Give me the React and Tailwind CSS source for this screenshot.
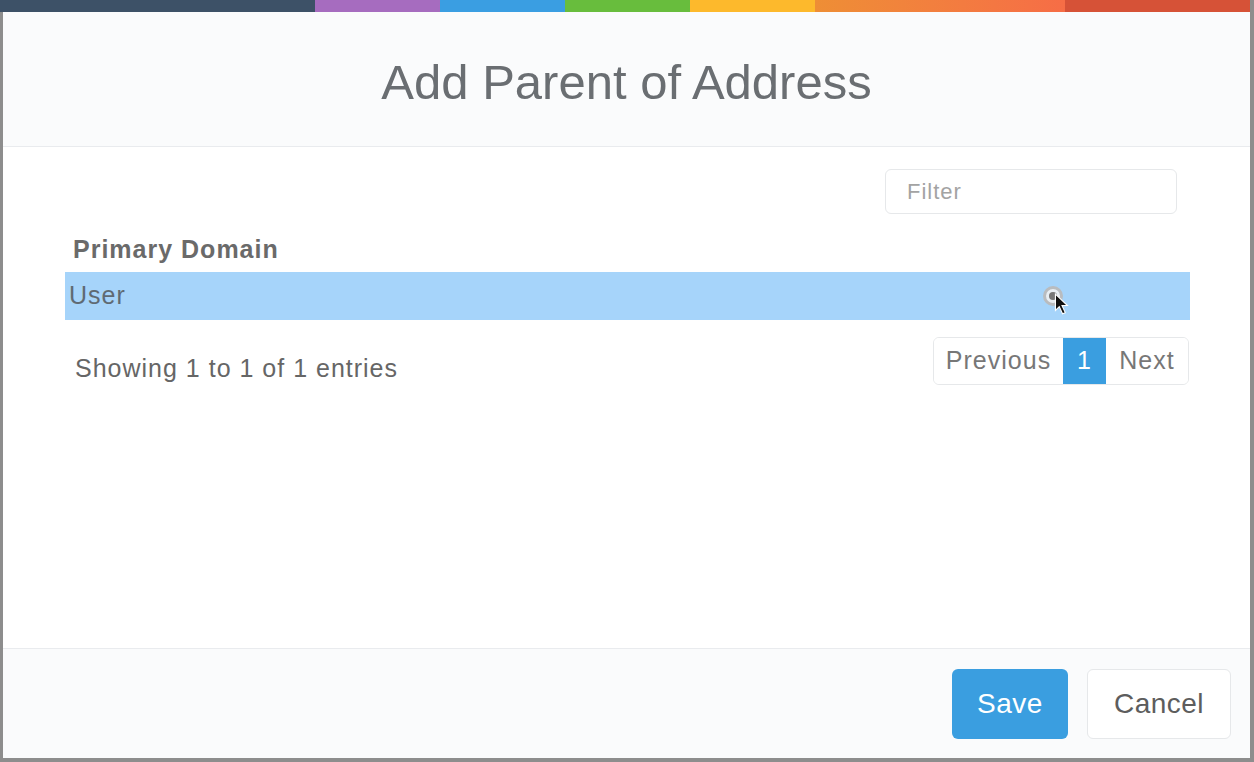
import React from "react";

const stripes = [
  { w: "w-[315px]", c: "bg-[#3d5167]" },
  { w: "w-[125px]", c: "bg-[#a66cbf]" },
  { w: "w-[125px]", c: "bg-[#3a9ee2]" },
  { w: "w-[125px]", c: "bg-[#68bd3d]" },
  { w: "w-[125px]", c: "bg-[#fdb92c]" },
  { w: "w-[250px]", c: "bg-gradient-to-r from-[#ee8e35] to-[#f66d46]" },
  { w: "flex-1", c: "bg-[#d65237]" },
];

const App = () => {
  return (
    <div
      className="w-[1254px] h-[762px] bg-[#8d8d8d] flex flex-col overflow-hidden"
      style={{ fontFamily: '"Liberation Sans", Arial, sans-serif' }}
    >
      <div className="flex h-[12px] w-[1250px] shrink-0">
        {stripes.map((s, i) => (
          <div key={i} className={`${s.w} ${s.c} h-full`} />
        ))}
      </div>

      <div className="ml-[3px] w-[1247px] h-[746px] flex flex-col bg-white">
        {/* header */}
        <div className="h-[135px] shrink-0 bg-[#fafbfc] border-b border-[#e9ebee] flex items-center justify-center pt-[6px]">
          <h1 className="text-[49px] leading-[58px] text-[#6a6e72]">
            Add Parent of Address
          </h1>
        </div>

        {/* body */}
        <div className="flex-1 pl-[62px] pr-[60px] pt-[22px] tracking-[1px]">
          <div className="flex justify-end pr-[13px]">
            <div className="w-[292px] h-[45px] border border-[#e6e8ea] rounded-[6px] flex items-center pl-[21px] text-[22px] text-[#a3a3a3]">
              Filter
            </div>
          </div>
          <div className="pl-[8px] mt-[20px] text-[25px] leading-[30px] font-bold text-[#6a6a6a]">
            Primary Domain
          </div>
          <div className="relative mt-[8px] h-[48px] bg-[#a6d4fa] flex items-center pl-[4px] text-[25px] text-[#5f6a73]">
            User
            <div className="absolute left-[978px] top-[14px] w-[20px] h-[20px] rounded-full bg-[#e8eef3] border-[3px] border-[#b9bcbf] flex items-center justify-center">
              <div className="w-[8px] h-[8px] rounded-full bg-[#777]" />
            </div>
            <svg className="absolute left-[989px] top-[21px]" width="16" height="24" viewBox="0 0 14 22">
              <path d="M1 1 L1 16 L4.5 12.5 L7.5 19 L10 18 L7 11.5 L12 11.5 Z" fill="#111" stroke="#fff" strokeWidth="1" />
            </svg>
          </div>
          <div className="flex items-start justify-between mt-[17px]">
            <div className="pl-[10px] pt-[16px] text-[25px] leading-[30px] text-[#666]">
              Showing 1 to 1 of 1 entries
            </div>
            <div className="flex h-[48px] border border-[#e6e8ea] rounded-[6px] overflow-hidden text-[25px] text-[#777] mr-[1px]">
              <div className="w-[129px] flex items-center justify-center bg-white">Previous</div>
              <div className="w-[43px] flex items-center justify-center bg-[#3a9ee0] text-white">1</div>
              <div className="w-[82px] flex items-center justify-center bg-white">Next</div>
            </div>
          </div>
        </div>

        {/* footer */}
        <div className="h-[110px] shrink-0 bg-[#fafbfc] border-t border-[#e9ebee] flex items-start justify-end gap-[19px] pr-[19px] pt-[20px]">
          <button className="w-[116px] h-[70px] rounded-[6px] bg-[#3a9ee0] text-white text-[28px] tracking-[0.5px]">
            Save
          </button>
          <button className="w-[144px] h-[70px] rounded-[6px] bg-white border border-[#e6e8ea] text-[#5d5d5d] text-[28px] tracking-[0.5px]">
            Cancel
          </button>
        </div>
      </div>
    </div>
  );
};

export default App;
